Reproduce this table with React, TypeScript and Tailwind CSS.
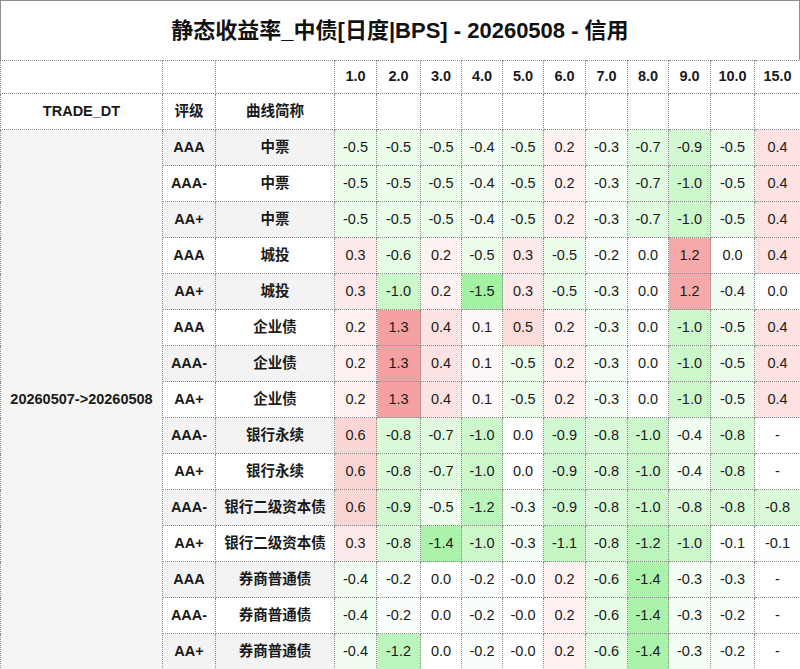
const tenors = ["1.0", "2.0", "3.0", "4.0", "5.0", "6.0", "7.0", "8.0", "9.0", "10.0", "15.0"];
const colW = [42, 44, 41, 41, 41, 42, 42, 41, 42, 44, 46];

const rows: [string, string, string[]][] = [
  ["AAA", "中票", ["-0.5", "-0.5", "-0.5", "-0.4", "-0.5", "0.2", "-0.3", "-0.7", "-0.9", "-0.5", "0.4"]],
  ["AAA-", "中票", ["-0.5", "-0.5", "-0.5", "-0.4", "-0.5", "0.2", "-0.3", "-0.7", "-1.0", "-0.5", "0.4"]],
  ["AA+", "中票", ["-0.5", "-0.5", "-0.5", "-0.4", "-0.5", "0.2", "-0.3", "-0.7", "-1.0", "-0.5", "0.4"]],
  ["AAA", "城投", ["0.3", "-0.6", "0.2", "-0.5", "0.3", "-0.5", "-0.2", "0.0", "1.2", "0.0", "0.4"]],
  ["AA+", "城投", ["0.3", "-1.0", "0.2", "-1.5", "0.3", "-0.5", "-0.3", "0.0", "1.2", "-0.4", "0.0"]],
  ["AAA", "企业债", ["0.2", "1.3", "0.4", "0.1", "0.5", "0.2", "-0.3", "0.0", "-1.0", "-0.5", "0.4"]],
  ["AAA-", "企业债", ["0.2", "1.3", "0.4", "0.1", "-0.5", "0.2", "-0.3", "0.0", "-1.0", "-0.5", "0.4"]],
  ["AA+", "企业债", ["0.2", "1.3", "0.4", "0.1", "-0.5", "0.2", "-0.3", "0.0", "-1.0", "-0.5", "0.4"]],
  ["AAA-", "银行永续", ["0.6", "-0.8", "-0.7", "-1.0", "0.0", "-0.9", "-0.8", "-1.0", "-0.4", "-0.8", "-"]],
  ["AA+", "银行永续", ["0.6", "-0.8", "-0.7", "-1.0", "0.0", "-0.9", "-0.8", "-1.0", "-0.4", "-0.8", "-"]],
  ["AAA-", "银行二级资本债", ["0.6", "-0.9", "-0.5", "-1.2", "-0.3", "-0.9", "-0.8", "-1.0", "-0.8", "-0.8", "-0.8"]],
  ["AA+", "银行二级资本债", ["0.3", "-0.8", "-1.4", "-1.0", "-0.3", "-1.1", "-0.8", "-1.2", "-1.0", "-0.1", "-0.1"]],
  ["AAA", "券商普通债", ["-0.4", "-0.2", "0.0", "-0.2", "-0.0", "0.2", "-0.6", "-1.4", "-0.3", "-0.3", "-"]],
  ["AAA-", "券商普通债", ["-0.4", "-0.2", "0.0", "-0.2", "-0.0", "0.2", "-0.6", "-1.4", "-0.3", "-0.2", "-"]],
  ["AA+", "券商普通债", ["-0.4", "-1.2", "0.0", "-0.2", "-0.0", "0.2", "-0.6", "-1.4", "-0.3", "-0.2", "-"]],
];

// heat colour, same scale for every column
function heat(s: string) {
  const v = parseFloat(s);
  if (isNaN(v) || v === 0) return "#ffffff";
  const t = Math.min(Math.abs(v) / 1.5, 1);
  if (v < 0) {
    const k = Math.pow(t, 1.4);
    const rb = Math.round(255 - 92 * k);
    const g = Math.round(255 - 14 * k);
    return `rgb(${rb},${g},${rb})`;
  }
  const r = Math.round(255 - 10 * t);
  const gb = Math.round(255 - 108 * t);
  return `rgb(${r},${gb},${gb})`;
}

const cell = "border border-dotted border-[#8a8a8a] text-center p-0";

export default function App() {
  return (
    <div
      className="w-[800px] h-[669px] bg-white text-[#1a1a1a] overflow-hidden"
      style={{ fontFamily: '"Liberation Sans", "Noto Sans CJK SC", sans-serif' }}
    >
      <div className="h-[60px] border-t border-x border-solid border-[#8f8f8f] flex items-center justify-center text-[22px] font-bold text-[#111]">
        静态收益率_中债[日度|BPS] - 20260508 - 信用
      </div>
      <table className="table-fixed border-collapse w-[800px] text-[14.5px]">
        <colgroup>
          <col className="w-[162px]" />
          <col className="w-[53px]" />
          <col className="w-[119px]" />
          {colW.map((w, i) => (
            <col key={i} style={{ width: w }} />
          ))}
        </colgroup>
        <thead>
          <tr className="h-[33px] font-bold">
            <th className={cell}></th>
            <th className={cell}></th>
            <th className={cell}></th>
            {tenors.map((t) => (
              <th key={t} className={cell}>
                {t}
              </th>
            ))}
          </tr>
          <tr className="h-[36px] font-bold">
            <th className={cell}>TRADE_DT</th>
            <th className={cell}>评级</th>
            <th className={cell}>曲线简称</th>
            {tenors.map((t) => (
              <th key={t} className={cell}></th>
            ))}
          </tr>
        </thead>
        <tbody>
          {rows.map(([grade, name, vals], i) => {
            const side = i % 2 === 0 ? "bg-[#f3f3f3]" : "bg-white";
            return (
              <tr key={i} className="h-[36px]">
                {i === 0 && (
                  <td rowSpan={rows.length} className={`${cell} bg-[#f5f5f5] font-bold`}>
                    20260507-&gt;20260508
                  </td>
                )}
                <td className={`${cell} ${side} font-bold`}>{grade}</td>
                <td className={`${cell} ${side} font-bold`}>{name}</td>
                {vals.map((v, j) => (
                  <td key={j} className={cell} style={{ backgroundColor: heat(v) }}>
                    {v}
                  </td>
                ))}
              </tr>
            );
          })}
        </tbody>
      </table>
    </div>
  );
}
